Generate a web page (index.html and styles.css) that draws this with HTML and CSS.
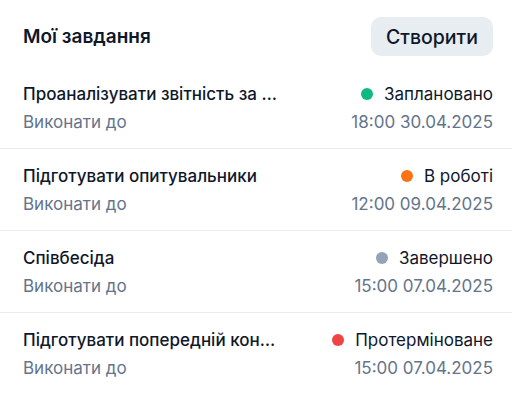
FILE: index.html
```html
<!DOCTYPE html>
<html lang="uk">
<head>
    <meta charset="UTF-8">
    <meta name="viewport" content="width=device-width, initial-scale=1.0">
    <title>Мої завдання</title>
    <link rel="stylesheet" href="styles.css">
</head>
<body>
    <div class="tasks">
        <div class="tasks-header">
            <h1>Мої завдання</h1>
            <button class="btn-create">Створити</button>
        </div>

        <div class="task">
            <div class="task-left">
                <div class="task-title">Проаналізувати звітність за квартал</div>
                <div class="task-sub">Виконати до</div>
            </div>
            <div class="task-right">
                <div class="status"><span class="dot dot-planned"></span>Заплановано</div>
                <div class="task-sub">18:00 30.04.2025</div>
            </div>
        </div>

        <div class="task">
            <div class="task-left">
                <div class="task-title">Підготувати опитувальники</div>
                <div class="task-sub">Виконати до</div>
            </div>
            <div class="task-right">
                <div class="status"><span class="dot dot-progress"></span>В роботі</div>
                <div class="task-sub">12:00 09.04.2025</div>
            </div>
        </div>

        <div class="task">
            <div class="task-left">
                <div class="task-title">Співбесіда</div>
                <div class="task-sub">Виконати до</div>
            </div>
            <div class="task-right">
                <div class="status"><span class="dot dot-done"></span>Завершено</div>
                <div class="task-sub">15:00 07.04.2025</div>
            </div>
        </div>

        <div class="task">
            <div class="task-left">
                <div class="task-title">Підготувати попередній контракт</div>
                <div class="task-sub">Виконати до</div>
            </div>
            <div class="task-right">
                <div class="status"><span class="dot dot-overdue"></span>Протерміноване</div>
                <div class="task-sub">15:00 07.04.2025</div>
            </div>
        </div>
    </div>
</body>
</html>
```

FILE: styles.css
```css
body { margin: 0; background: #fff; font-family: Inter, "Noto Sans", sans-serif; color: #0f172a; }
.tasks { padding-top: 17px; }
.tasks-header { display: flex; align-items: center; justify-content: space-between; padding: 0 19px 0 23px; height: 39px; margin-bottom: 11px; }
.tasks-header h1 { margin: 0; font-size: 19px; font-weight: 600; }
.btn-create { width: 122px; height: 39px; border: none; border-radius: 10px; background: #e8edf2; color: #0f172a; font-family: inherit; font-size: 19.5px; font-weight: 500; cursor: pointer; }
.task { display: flex; justify-content: space-between; padding: 15px 19px 14px 23px; border-bottom: 1px solid #e9ecef; }
.task:last-child { border-bottom: none; }
.task-left { min-width: 0; max-width: 254px; display: flex; flex-direction: column; gap: 4px; }
.task-right { display: flex; flex-direction: column; align-items: flex-end; gap: 4px; }
.task-title { font-size: 17px; font-weight: 500; line-height: 24px; white-space: nowrap; overflow: hidden; text-overflow: ellipsis; }
.task-sub { font-size: 17px; line-height: 24px; color: #64748b; white-space: nowrap; }
.status { display: flex; align-items: center; gap: 11px; font-size: 17px; line-height: 24px; }
.dot { width: 12px; height: 12px; border-radius: 50%; }
.dot-planned { background: #10b981; }
.dot-progress { background: #f97316; }
.dot-done { background: #94a3b8; }
.dot-overdue { background: #ef4444; }
```
